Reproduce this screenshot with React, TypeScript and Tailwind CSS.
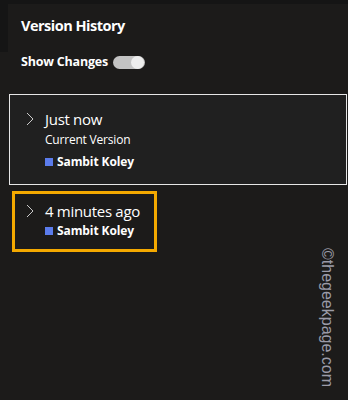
import React from 'react';

const font = { fontFamily: '"Open Sans", "Noto Sans", sans-serif' };

const Chevron = () => (
  <svg width="8" height="14" viewBox="0 0 8 14" className="shrink-0">
    <polyline points="1,1 7,7 1,13" fill="none" stroke="#c9c9c9" strokeWidth="1" />
  </svg>
);

const Author = ({ name }: { name: string }) => (
  <div className="flex items-center gap-[4px] h-[16px]">
    <span className="w-[8px] h-[8px] bg-[#5b7cec]" />
    <span className="text-[12px] font-bold text-white leading-[16px] tracking-[-0.1px]">{name}</span>
  </div>
);

export default function App() {
  return (
    <div className="relative w-[348px] h-[400px] overflow-hidden bg-[#1c1b1a] text-white" style={font}>
      <div className="h-[4px] bg-[#151515]" />
      <div className="flex">
        <div className="w-[8px] h-[48px] bg-[#151515]" />
        <div className="pl-[13px] pt-[12px]">
          <h1 className="text-[14.5px] font-bold leading-[20px] tracking-[-0.5px]">Version History</h1>
        </div>
      </div>

      <div className="flex items-center gap-[5px] pl-[21px] mt-[2px]">
        <span className="text-[12.5px] font-bold leading-[16px] tracking-[-0.2px]">Show Changes</span>
        <div className="flex items-center justify-end w-[32px] h-[13px] rounded-full bg-[#c3c3c3] pr-[1px]">
          <span className="w-[13px] h-[13px] rounded-full bg-[#ededed]" />
        </div>
      </div>

      <div className="ml-[9px] mr-[1px] mt-[24px] h-[91px] border border-[#e6e6e6] bg-[#202020] pl-[16px] pt-[14px]">
        <div className="flex gap-[11px]">
          <div className="pt-[3px]">
            <Chevron />
          </div>
          <div className="flex flex-col">
            <span className="text-[15px] leading-[20px] tracking-[-0.3px]">Just now</span>
            <span className="text-[12px] leading-[16px] mt-[3px] tracking-[-0.2px]">Current Version</span>
            <div className="mt-[6px]">
              <Author name="Sambit Koley" />
            </div>
          </div>
        </div>
      </div>

      <div className="ml-[12px] mt-[6px] w-[145px] h-[61px] border-[3px] border-[#f4a900] pl-[11px] pt-[7px]">
        <div className="flex gap-[11px]">
          <div className="pt-[3px]">
            <Chevron />
          </div>
          <div className="flex flex-col">
            <span className="text-[15px] leading-[20px] tracking-[-0.3px]">4 minutes ago</span>
            <div className="mt-[2px]">
              <Author name="Sambit Koley" />
            </div>
          </div>
        </div>
      </div>

      <div
        className="absolute left-[320px] top-[248px] text-[16px] leading-[14px] text-[#9b9ba8] whitespace-nowrap origin-top-left rotate-90 translate-x-[14px]"
        style={{ fontFamily: '"Liberation Sans", Arial, sans-serif' }}
      >
        ©thegeekpage.com
      </div>
    </div>
  );
}
